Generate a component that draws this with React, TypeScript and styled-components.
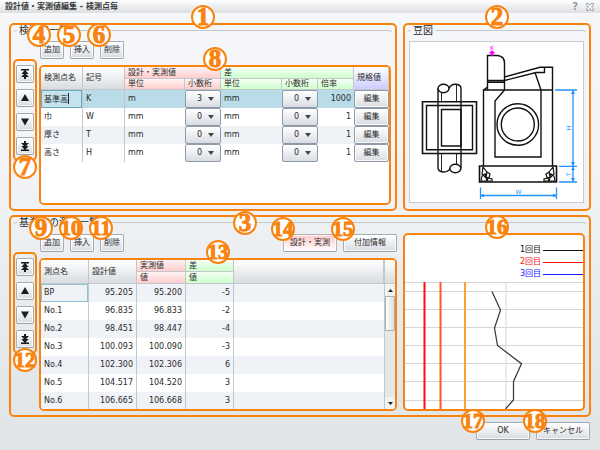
import React from "react";
import styled, { createGlobalStyle, css } from "styled-components";

const orange = "#f9830f";
const line = "#c3c7cc";

const GlobalStyle = createGlobalStyle`
  * { box-sizing: border-box; }
  body { margin: 0; }
  body, button, input, select {
    font-family: "DejaVu Sans", "Noto Sans CJK JP", sans-serif;
    font-size: 8px;
    line-height: 10px;
    color: #2b2b2b;
  }
`;

const Window = styled.div`
  display: flex;
  flex-direction: column;
  min-height: 100vh;
  background: linear-gradient(#f6f7f9, #f1f3f6 40%, #e3e7ea 85%, #e1e5e8);
`;

const TitleBar = styled.header`
  display: flex;
  align-items: center;
  gap: 8px;
  height: 13px;
  padding: 0 6px 0 5px;
  background: linear-gradient(#ffffff, #eceef0 50%, #dddfe2);
`;

const Title = styled.h1`
  flex: 1;
  margin: 0;
  font-size: 8px;
  line-height: 12px;
  font-weight: 700;
  color: #3a3a3a;
`;

const TitleButton = styled.button`
  display: flex;
  padding: 0;
  border: 0;
  background: none;
  font-size: 10px;
  font-weight: 700;
  color: #96999d;
`;

const Main = styled.main`
  display: grid;
  grid-template-columns: minmax(0, 388fr) minmax(0, 188fr);
  gap: 4px 6px;
  padding: 10px 9px 0;
`;

const Frame = styled.div`
  position: relative;
  min-width: 0;
  border: 2px solid ${orange};
  border-radius: 5px;
`;

const Panel = styled(Frame).attrs({ as: "section" })<{ $wide?: boolean }>`
  display: flex;
  flex-direction: column;
  ${(p) => p.$wide && css`grid-column: 1 / -1;`}
`;

const GroupHeader = styled.div`
  display: grid;
  grid-template-columns: 5px auto 1fr;
  gap: 2px;
  height: 12px;
  padding: 0 1px;
`;

const GroupLine = styled.span<{ $end?: boolean }>`
  margin-top: 5px;
  height: 7px;
  border-top: 1px solid ${line};
  ${(p) =>
    p.$end
      ? css`border-right: 1px solid transparent; border-top-right-radius: 6px;`
      : css`border-left: 1px solid transparent; border-top-left-radius: 6px;`}
`;

const GroupTitle = styled.h2`
  margin: 0;
  padding-right: 1px;
  font-size: 10px;
  line-height: 12px;
  font-weight: 400;
`;

const BadgeMark = styled.span<{ $x: string; $y: string; $small: boolean }>`
  position: absolute;
  left: ${(p) => p.$x};
  top: ${(p) => p.$y};
  z-index: 3;
  display: flex;
  align-items: center;
  justify-content: center;
  width: 24px;
  height: 24px;
  border: 2px solid ${orange};
  border-radius: 50%;
  background: #fff;
  color: ${orange};
  font-family: "Liberation Serif", serif;
  font-weight: 700;
  font-size: ${(p) => (p.$small ? 21 : 25)}px;
  line-height: 20px;
  -webkit-text-stroke: 1px ${orange};
  transform: translate(-50%, -50%);
  pointer-events: none;
`;

function Badge({ n, x = "50%", y = "-8px" }: { n: number; x?: string; y?: string }) {
  return <BadgeMark $x={x} $y={y} $small={n > 9}>{n}</BadgeMark>;
}

const UpperBody = styled.div`
  display: grid;
  grid-template-columns: 24px minmax(0, 1fr);
  gap: 2px;
  padding: 4px 4px 4px 2px;
`;

const LowerBody = styled.div`
  display: grid;
  grid-template-columns: minmax(0, 386fr) minmax(0, 182fr);
  gap: 6px;
  padding: 4px 4px 4px 0;
`;

const LowerLeft = styled.div`
  display: grid;
  grid-template-columns: 24px minmax(0, 1fr);
  gap: 2px;
  padding: 1px 0 0 2px;
`;

const Strip = styled(Frame)`
  display: flex;
  flex-direction: column;
  align-self: start;
  align-items: center;
  gap: 6px;
  margin-top: 18px;
  padding: 4px 0;
`;

const Column = styled.div`
  display: flex;
  flex-direction: column;
  gap: 6px;
`;

const Toolbar = styled.div`
  display: flex;
  gap: 6px;
  padding-left: 1px;
`;

const Slot = styled.div<{ $push?: boolean }>`
  position: relative;
  ${(p) => p.$push && css`margin-left: auto;`}
`;

const Button = styled.button<{ $w?: number; $pink?: boolean }>`
  display: flex;
  align-items: center;
  justify-content: center;
  width: ${(p) => p.$w ?? 24}px;
  height: 18px;
  padding: 0;
  white-space: nowrap;
  border: 1px solid ${(p) => (p.$pink ? "#b9aeb4" : "#a3abb4")};
  border-bottom-color: #98a2ad;
  border-radius: 2px;
  box-shadow: inset 0 0 0 1px rgba(255, 255, 255, 0.8);
  background: ${(p) =>
    p.$pink
      ? "linear-gradient(#ffc9c9, #ffe3e3 50%, #ffffff)"
      : "linear-gradient(#ffffff, #eceef1 50%, #d8dce1)"};
`;

const CellButton = styled(Button)`
  width: 100%;
  border-color: #8f9ba9;
`;

const TableFrame = styled(Frame)<{ $h: number }>`
  height: ${(p) => p.$h}px;
`;

const Viewport = styled.div`
  display: flex;
  height: 100%;
  overflow: hidden;
  border-radius: 3px;
  background: #fff;
`;

const tones = {
  gray: "linear-gradient(#ffffff, #eceef0 50%, #d9dce0)",
  pink: "linear-gradient(#fff4f4, #ffcccc)",
  green: "linear-gradient(#f6fff6, #ccffcc)",
  violet: "linear-gradient(#ffffff, #ccccff)",
};

const Th = styled.th<{ $tone?: keyof typeof tones }>`
  height: 12px;
  padding: 0 0 0 3px;
  text-align: left;
  font-weight: 400;
  white-space: nowrap;
  overflow: hidden;
  border-right: 1px solid ${line};
  border-bottom: 1px solid ${line};
  background: ${(p) => tones[p.$tone ?? "gray"]};
`;

const Table = styled.table<{ $compact?: boolean }>`
  flex: 1;
  align-self: flex-start;
  width: 100%;
  table-layout: fixed;
  border-collapse: separate;
  border-spacing: 0;
  ${(p) => p.$compact && css`tr:last-child > ${Th} { height: 11px; }`}
`;

const Tr = styled.tr<{ $selected?: boolean }>`
  height: 18px;
  background: #fff;
  &:nth-child(odd) { background: #eff2f7; }
  ${(p) => p.$selected && css`&:nth-child(odd) { background: #b9dce8; }`}
`;

const Td = styled.td<{ $num?: boolean; $flush?: boolean; $line?: boolean; $active?: boolean }>`
  height: 18px;
  padding: ${(p) => (p.$flush ? "0" : "0 3px")};
  text-align: ${(p) => (p.$num ? "right" : "left")};
  white-space: nowrap;
  border-right: ${(p) => (p.$line ? `1px solid ${line}` : "0")};
  ${(p) => p.$active && css`box-shadow: inset 0 0 0 1px #8cc3d6;`}
`;

const Editor = styled.div`
  display: flex;
  align-items: center;
  height: 18px;
  padding: 0 0 1px 2px;
  border: 1px solid #6aa9be;
  background: #c5e3ee;
`;

const TextInput = styled.input`
  width: 24px;
  height: 12px;
  padding: 0;
  border: 0;
  outline: 0;
  background: none;
`;

const Caret = styled.span`
  width: 1px;
  height: 11px;
  background: #222;
`;

const SelectBox = styled.div`
  display: grid;
  align-items: center;
  > * { grid-area: 1 / 1; }
  > svg { justify-self: end; margin-right: 7px; pointer-events: none; }
`;

const Select = styled.select`
  appearance: none;
  width: 100%;
  height: 18px;
  padding: 0 0 0 11px;
  border: 1px solid #8f9ba9;
  border-radius: 2px;
  background: linear-gradient(#ffffff, #eceef1 50%, #d8dce1);
`;

const Scroll = styled.div`
  display: flex;
  flex-direction: column;
  width: 11px;
  border-left: 1px solid ${line};
  background: #e4e8eb;
`;

const ScrollHead = styled.div`
  height: 24px;
  border-bottom: 1px solid ${line};
  background: ${tones.gray};
`;

const ScrollButton = styled.button`
  display: flex;
  align-items: center;
  justify-content: center;
  height: 12px;
  padding: 0;
  border: 0;
  background: #f0f2f4;
`;

const Track = styled.div`
  flex: 1;
`;

const Thumb = styled.div`
  height: 35px;
  border: 1px solid #a9b0b8;
  border-radius: 1px;
  background: linear-gradient(90deg, #ffffff, #d9dde2);
`;

const DiagramBox = styled.div`
  margin: 4px 5px 5px 4px;
  border: 1px solid #c9cdd1;
  background: #fff;
  svg { display: block; width: 100%; height: 160px; }
`;

const ChartFrame = styled(Frame)`
  display: flex;
  flex-direction: column;
  justify-content: flex-end;
  background: #fff;
  > svg { display: block; width: 100%; height: 127px; }
`;

const Legend = styled.ul`
  margin: 0 0 2px;
  padding: 0;
  list-style: none;
`;

const LegendItem = styled.li<{ $color: string }>`
  display: flex;
  align-items: center;
  justify-content: flex-end;
  gap: 2px;
  height: 12px;
  color: ${(p) => p.$color};
  &::after { content: ""; width: 40px; height: 1px; background: ${(p) => p.$color}; }
`;

const Footer = styled.footer`
  display: flex;
  justify-content: flex-end;
  gap: 6px;
  padding: 5px 10px 10px;
`;

const moves = [
  { label: "先頭へ", d: "M1 0H9V1.6H5.6L8.6 5H6L9 8H6V10H4V8H1L4 5H1.4L4.4 1.6H1Z" },
  { label: "上へ", d: "M5 1L9 8H1Z" },
  { label: "下へ", d: "M5 8.5L1 1.5H9Z" },
  { label: "末尾へ", d: "M1 10H9V8.4H5.6L8.6 5H6L9 2H6V0H4V2H1L4 5H1.4L4.4 8.4H1Z" },
];

function MoveStrip({ n }: { n: number }) {
  return (
    <Strip>
      {moves.map((m) => (
        <Button key={m.label} $w={18} aria-label={m.label}>
          <svg width="10" height="10" viewBox="0 0 10 10"><path d={m.d} fill="#1c1c1c" /></svg>
        </Button>
      ))}
      <Badge n={n} y="calc(100% + 8px)" />
    </Strip>
  );
}

function EditButtons({ start }: { start: number }) {
  return (
    <>
      {["追加", "挿入", "削除"].map((t, i) => (
        <Slot key={t}>
          <Button>{t}</Button>
          <Badge n={start + i} x={start > 4 ? "1px" : "-1px"} y="-6px" />
        </Slot>
      ))}
    </>
  );
}

function Group({ title }: { title: string }) {
  return (
    <GroupHeader>
      <GroupLine />
      <GroupTitle>{title}</GroupTitle>
      <GroupLine $end />
    </GroupHeader>
  );
}

function Digits({ value, label }: { value: number; label: string }) {
  return (
    <SelectBox>
      <Select aria-label={label} defaultValue={value}>
        {[0, 1, 2, 3].map((v) => <option key={v}>{v}</option>)}
      </Select>
      <svg width="6" height="4" viewBox="0 0 6 4"><path d="M0 0H6L3 4Z" fill="#444" /></svg>
    </SelectBox>
  );
}

const items = [
  { name: "基準高", sign: "K", unit: "m", digits: 3, rate: 1000 },
  { name: "巾", sign: "W", unit: "mm", digits: 0, rate: 1 },
  { name: "厚さ", sign: "T", unit: "mm", digits: 0, rate: 1 },
  { name: "高さ", sign: "H", unit: "mm", digits: 0, rate: 1 },
];

function ItemTable() {
  return (
    <Table $compact>
      <colgroup>
        {[42, 42, 60, 36, 61, 36, 36, 35].map((w, i) => <col key={i} width={w} />)}
      </colgroup>
      <thead>
        <tr>
          <Th rowSpan={2}>検測点名</Th>
          <Th rowSpan={2}>記号</Th>
          <Th colSpan={2} $tone="pink">設計・実測値</Th>
          <Th colSpan={3} $tone="green">差</Th>
          <Th rowSpan={2} $tone="violet">規格値</Th>
        </tr>
        <tr>
          <Th $tone="pink">単位</Th>
          <Th $tone="pink">小数桁</Th>
          <Th $tone="green">単位</Th>
          <Th $tone="green">小数桁</Th>
          <Th $tone="green">倍率</Th>
        </tr>
      </thead>
      <tbody>
        {items.map((r, i) => (
          <Tr key={r.sign} $selected={i === 0}>
            {i === 0 ? (
              <Td $flush $line>
                <Editor>
                  <TextInput aria-label="検測点名" defaultValue={r.name} />
                  <Caret />
                </Editor>
              </Td>
            ) : (
              <Td $line>{r.name}</Td>
            )}
            <Td $line>{r.sign}</Td>
            <Td>{r.unit}</Td>
            <Td $flush><Digits value={r.digits} label={`${r.name} 設計・実測値 小数桁`} /></Td>
            <Td>mm</Td>
            <Td $flush><Digits value={0} label={`${r.name} 差 小数桁`} /></Td>
            <Td $num>{r.rate}</Td>
            <Td $flush><CellButton>編集</CellButton></Td>
          </Tr>
        ))}
      </tbody>
    </Table>
  );
}

const points: [string, string, string, number][] = [
  ["BP", "95.205", "95.200", -5],
  ["No.1", "96.835", "96.833", -2],
  ["No.2", "98.451", "98.447", -4],
  ["No.3", "100.093", "100.090", -3],
  ["No.4", "102.300", "102.306", 6],
  ["No.5", "104.517", "104.520", 3],
  ["No.6", "106.665", "106.668", 3],
];

function PointTable() {
  return (
    <Table>
      <colgroup>
        <col width={48} /><col width={48} /><col width={49} /><col width={48} /><col />
      </colgroup>
      <thead>
        <tr>
          <Th rowSpan={2}>測点名</Th>
          <Th rowSpan={2}>設計値</Th>
          <Th $tone="pink">実測値</Th>
          <Th $tone="green">差</Th>
          <Th rowSpan={2} />
        </tr>
        <tr>
          <Th $tone="pink">値</Th>
          <Th $tone="green">値</Th>
        </tr>
      </thead>
      <tbody>
        {points.map(([name, plan, real, diff], i) => (
          <Tr key={name}>
            <Td $line $active={i === 0}>{name}</Td>
            <Td $num $line>{plan}</Td>
            <Td $num $line>{real}</Td>
            <Td $num $line>{diff}</Td>
            <Td />
          </Tr>
        ))}
      </tbody>
    </Table>
  );
}

function Diagram() {
  return (
    <svg viewBox="10 42 173 160" role="img" aria-label="豆図">
      <g fill="none" stroke="#111" strokeWidth="1.4">
        <path d="M87.5 81V55.5H97Q104.5 56 104.5 63V90M87.5 80.5H104.5M87.5 82.3H104.5M87.5 81V90M83.5 90L87.5 87" />
        <path d="M104.5 77L140 67.3H152.5V166M104.5 80.5L136 72.5H144.5V67.3M135 72.5L141 90" />
        <path d="M83.5 166V90H152.5M104.5 90L95 101V157H141V90" />
        <circle cx="117.8" cy="124.5" r="20.8" />
        <circle cx="117.8" cy="124.5" r="16.5" />
        <path d="M79.5 166H156.5V182H79.5Z" strokeWidth="1.6" />
        <path d="M22.5 101.8H76.5V153.5H22.5Z" strokeWidth="1.6" />
        <path d="M26.5 105.5H72.5V149.8H26.5Z" />
        <path d="M41.5 109.5H61V146H41.5Z" />
        <ellipse cx="43.5" cy="88.5" rx="5.5" ry="4.2" />
        <ellipse cx="55.3" cy="168.5" rx="5.5" ry="4.2" />
        <path d="M38 88.5V168.5Q39 172 44 172Q48 172 50 168.5M49 88.5Q51 84.3 55 84.3Q61 84.3 61 88.5V168.5" />
        <path d="M41.5 92V101.8M56.5 85V101.8M41.5 153.5V171M56.5 153.5V164" strokeWidth="0.9" />
      </g>
      <g fill="#fff" stroke="#111" strokeWidth="1.2">
        <path d="M83 167L87 172L85 177L82 174ZM82 176L85 174L87 181H81ZM87 172L90 174L89 178L86 177ZM88 178L92 179L92 181H87Z" />
        <path d="M153 167L149 172L151 177L154 174ZM154 176L151 174L149 181H155ZM149 172L146 174L147 178L150 177ZM148 178L144 179L144 181H149Z" />
      </g>
      <g fill="none" stroke="#2492ff" strokeWidth="1.3">
        <path d="M155 90H177M159 166.3H177M159 182H177M173 90V182M80.5 187.5V199M156.5 187.5V199M80.5 195.5H156.5" />
      </g>
      <path
        fill="#2492ff"
        d="M173 90L171 94H175ZM173 166L171 162H175ZM173 167L171 170H175ZM173 182L171 178H175ZM80.5 195.5L84 193.5V197.5ZM156.5 195.5L153 193.5V197.5Z"
      />
      <path d="M91 51H93V52H94.5L92 56L89.5 52H91Z" fill="#f0f" stroke="#f0f" strokeWidth="0.5" />
      <g fontSize="6" textAnchor="middle">
        <text x="92" y="50" fill="#f0f">K</text>
        <text x="118.5" y="193.5" fill="#2492ff">W</text>
        <text transform="translate(170.5 128) rotate(-90)" fill="#2492ff">H</text>
        <text transform="translate(170.5 174.3) rotate(-90)" fill="#2492ff">T</text>
      </g>
    </svg>
  );
}

function Plot() {
  return (
    <svg viewBox="0 0 178 127" preserveAspectRatio="none" role="img" aria-label="測定値グラフ">
      <path
        d="M0 .5H178M0 9.5H178M0 27.5H178M0 45.5H178M0 63.5H178M0 81.5H178M0 99.5H178M0 118.5H178M101 0V127"
        stroke="#d6d6d6"
      />
      <path d="M19.5 0V127" stroke="#ff0f0f" strokeWidth="2" />
      <path d="M35.5 0V127" stroke="#ff5a26" strokeWidth="2" />
      <path d="M60 0V127" stroke="#ff9c3c" strokeWidth="2" />
      <polyline
        points="87,9.5 95.5,28 89.5,46 92.5,63.5 116.5,81.7 108.5,99.5 108.5,118 100.5,127"
        fill="none"
        stroke="#333"
        strokeWidth="1.2"
      />
    </svg>
  );
}

export default function App() {
  return (
    <Window>
      <GlobalStyle />
      <TitleBar>
        <Title>設計値・実測値編集 - 検測点毎</Title>
        <TitleButton aria-label="ヘルプ">?</TitleButton>
        <TitleButton aria-label="閉じる">
          <svg width="8" height="8" viewBox="0 0 8 8">
            <path
              d="M.5 .5H2.5L4 2.4L5.5 .5H7.5V1.8L5.6 4L7.5 6.2V7.5H5.5L4 5.6L2.5 7.5H.5V6.2L2.4 4L.5 1.8Z"
              fill="#fff"
              stroke="#96999d"
            />
          </svg>
        </TitleButton>
      </TitleBar>
      <Main>
        <Panel>
          <Badge n={1} />
          <Group title="検測点一覧" />
          <UpperBody>
            <MoveStrip n={7} />
            <Column>
              <Toolbar><EditButtons start={4} /></Toolbar>
              <TableFrame $h={140}>
                <Badge n={8} />
                <Viewport><ItemTable /></Viewport>
              </TableFrame>
            </Column>
          </UpperBody>
        </Panel>
        <Panel>
          <Badge n={2} />
          <Group title="豆図" />
          <DiagramBox><Diagram /></DiagramBox>
        </Panel>
        <Panel $wide>
          <Badge n={3} x="234px" y="6px" />
          <Group title="基準高の測点一覧" />
          <LowerBody>
            <LowerLeft>
              <MoveStrip n={12} />
              <Column>
                <Toolbar>
                  <EditButtons start={9} />
                  <Slot $push>
                    <Button $w={54} $pink>設計・実測</Button>
                    <Badge n={14} x="0px" y="-5px" />
                  </Slot>
                  <Slot>
                    <Button $w={54}>付加情報</Button>
                    <Badge n={15} x="0px" y="-5px" />
                  </Slot>
                </Toolbar>
                <TableFrame $h={153}>
                  <Badge n={13} />
                  <Viewport>
                    <PointTable />
                    <Scroll>
                      <ScrollHead />
                      <ScrollButton aria-label="上へスクロール">
                        <svg width="5" height="3" viewBox="0 0 5 3"><path d="M0 3L2.5 0L5 3Z" fill="#222" /></svg>
                      </ScrollButton>
                      <Track><Thumb /></Track>
                      <ScrollButton aria-label="下へスクロール">
                        <svg width="5" height="3" viewBox="0 0 5 3"><path d="M0 0L2.5 3L5 0Z" fill="#222" /></svg>
                      </ScrollButton>
                    </Scroll>
                  </Viewport>
                </TableFrame>
              </Column>
            </LowerLeft>
            <ChartFrame>
              <Badge n={16} x="calc(50% + 3px)" />
              <Legend>
                <LegendItem $color="#111111">1回目</LegendItem>
                <LegendItem $color="#ff1010">2回目</LegendItem>
                <LegendItem $color="#1818ff">3回目</LegendItem>
              </Legend>
              <Plot />
            </ChartFrame>
          </LowerBody>
        </Panel>
      </Main>
      <Footer>
        <Slot>
          <Button $w={54}>OK</Button>
          <Badge n={17} x="-3px" y="-1px" />
        </Slot>
        <Slot>
          <Button $w={54}>キャンセル</Button>
          <Badge n={18} x="-1px" y="-1px" />
        </Slot>
      </Footer>
    </Window>
  );
}
